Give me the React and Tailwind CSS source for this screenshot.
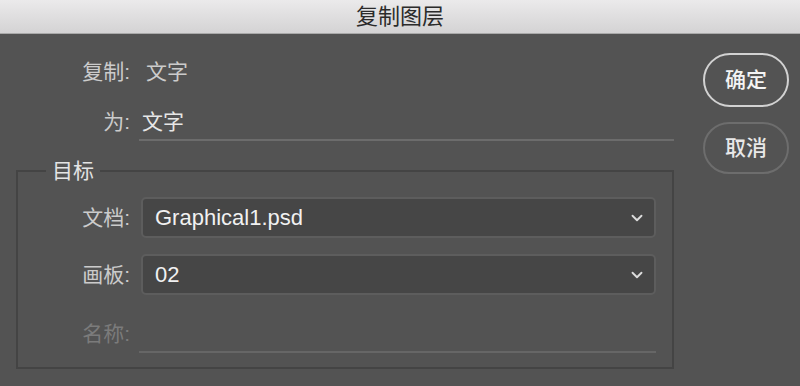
import { ChevronDown } from 'lucide-react';

const FONT = { fontFamily: '"Liberation Sans", "Noto Sans CJK SC", sans-serif' };

// dropdown field used inside the 目标 group
function Select({ value }) {
  return (
    <div className="ml-[11px] flex h-[41px] w-[515px] items-center justify-between rounded-[5px] border-2 border-[#5d5d5d] bg-[#464646] pl-[12px] pr-[8px]">
      <span className="text-[22px] text-[#f1f1f1]">{value}</span>
      <ChevronDown size={18} strokeWidth={2.5} className="text-[#dcdcdc]" />
    </div>
  );
}

export default function App() {
  return (
    <div className="h-[386px] w-[800px] overflow-hidden bg-[#535353]" style={FONT}>
      {/* ── Title bar ── */}
      <div className="flex h-[34px] items-center justify-center border-b border-[#a9a9a9] bg-gradient-to-b from-[#ebeaeb] to-[#d4d3d4]">
        <span className="text-[22px] text-[#2b2b2b]">复制图层</span>
      </div>

      <div className="flex pl-[16px]">
        {/* ── Left column ── */}
        <div className="w-[658px]">
          <div className="mt-[20px] flex h-[36px] items-center text-[21px] text-[#cbcbcb]">
            <span className="w-[114px] text-right">复制:</span>
            <span className="ml-[16px]">文字</span>
          </div>

          <div className="mt-[15px] flex h-[36px] items-stretch text-[21px] text-[#cbcbcb]">
            <span className="flex w-[114px] items-center justify-end pb-[2px]">为:</span>
            <div className="ml-[9px] flex flex-1 items-center border-b-2 border-[#6c6c6c] pl-[3px] text-[#e6e6e6]">
              文字
            </div>
          </div>

          <fieldset className="mt-[18px] h-[210px] border-2 border-[#444444] pb-0 pl-0 pr-0 pt-0">
            <legend className="ml-[28px] px-[6px] text-[21px] leading-[24px] text-[#e4e4e4]">目标</legend>

            <div className="mt-[14px] flex items-center text-[21px] text-[#cbcbcb]">
              <span className="w-[112px] text-right">文档:</span>
              <Select value="Graphical1.psd" />
            </div>

            <div className="mt-[16px] flex items-center text-[21px] text-[#cbcbcb]">
              <span className="w-[112px] text-right">画板:</span>
              <Select value="02" />
            </div>

            <div className="mt-[20px] flex h-[38px] items-stretch text-[21px] text-[#7b7b7b]">
              <span className="flex w-[112px] items-center justify-end">名称:</span>
              <div className="ml-[9px] w-[517px] border-b-2 border-[#666666]" />
            </div>
          </fieldset>
        </div>

        {/* ── Buttons ── */}
        <div className="ml-[29px] flex w-[86px] flex-col">
          <button className="mt-[19px] h-[54px] rounded-full border-2 border-[#d2d2d2] text-[21px] font-medium text-[#f4f4f4]">
            确定
          </button>
          <button className="mt-[15px] h-[52px] rounded-full border-2 border-[#6d6d6d] text-[21px] font-medium text-[#e8e8e8]">
            取消
          </button>
        </div>
      </div>
    </div>
  );
}
